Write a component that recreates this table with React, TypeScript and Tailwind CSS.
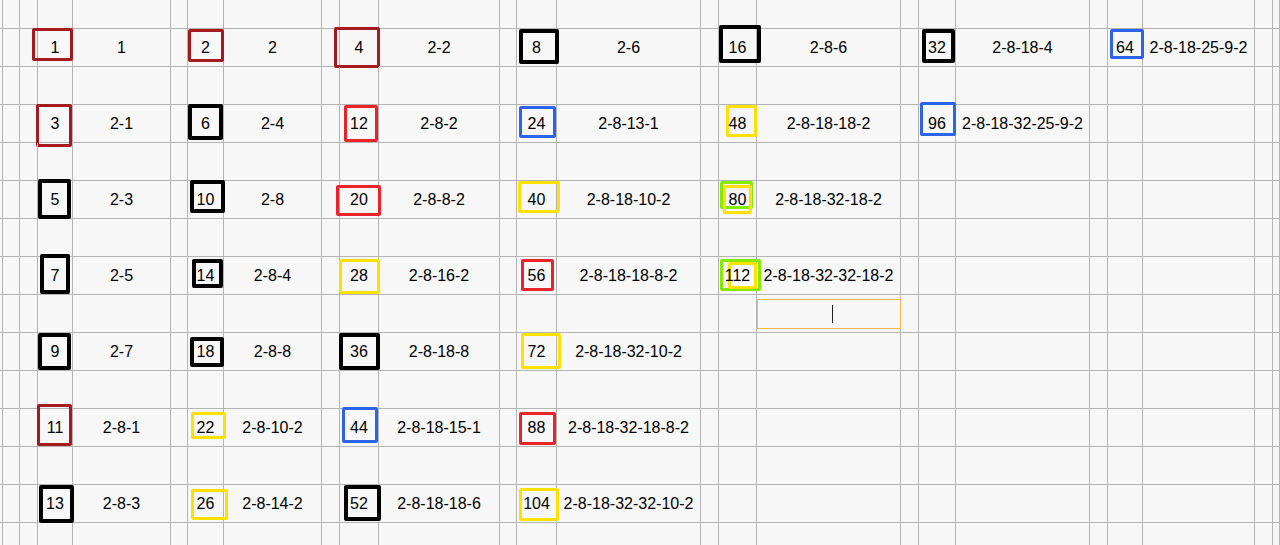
import React from "react";

type Box = { l: number; t: number; w: number; h: number; c: string; fill?: boolean };
type Entry = { n: string; t: string; boxes: Box[] } | null;

const COLOR: Record<string, string> = {
  dr: "border-[#a31a1f] border-[3px]",
  r: "border-[#ea2229] border-[3px]",
  b: "border-[#2b63e9] border-[3px]",
  y: "border-[#ffe100] border-[3px]",
  g: "border-[#84ea00] border-[3px]",
  k: "border-black border-4",
};

const DATA: Entry[][] = [
  [
    { n: "1", t: "1", boxes: [{ l: -6, t: -1, w: 41, h: 33, c: "dr" }] },
    { n: "2", t: "2", boxes: [{ l: 0, t: 0, w: 36, h: 33, c: "dr" }] },
    { n: "4", t: "2-2", boxes: [{ l: -6, t: -2, w: 46, h: 41, c: "dr" }] },
    { n: "8", t: "2-6", boxes: [{ l: 2, t: 0, w: 40, h: 35, c: "k" }] },
    { n: "16", t: "2-8-6", boxes: [{ l: 0, t: -4, w: 42, h: 38, c: "k" }] },
    { n: "32", t: "2-8-18-4", boxes: [{ l: 3, t: 0, w: 33, h: 34, c: "k" }] },
    { n: "64", t: "2-8-18-25-9-2", boxes: [{ l: 2, t: 0, w: 34, h: 30, c: "b" }] },
  ],
  [
    { n: "3", t: "2-1", boxes: [{ l: -2, t: -1, w: 36, h: 43, c: "dr" }] },
    { n: "6", t: "2-4", boxes: [{ l: 0, t: -1, w: 35, h: 36, c: "k" }] },
    { n: "12", t: "2-8-2", boxes: [{ l: 4, t: 0, w: 34, h: 37, c: "r" }] },
    { n: "24", t: "2-8-13-1", boxes: [{ l: 2, t: 1, w: 37, h: 32, c: "b" }] },
    { n: "48", t: "2-8-18-18-2", boxes: [{ l: 7, t: 0, w: 31, h: 32, c: "y" }] },
    { n: "96", t: "2-8-18-32-25-9-2", boxes: [{ l: 1, t: -3, w: 36, h: 34, c: "b" }] },
    null,
  ],
  [
    { n: "5", t: "2-3", boxes: [{ l: 0, t: -2, w: 33, h: 40, c: "k" }] },
    { n: "10", t: "2-8", boxes: [{ l: 2, t: -1, w: 35, h: 33, c: "k" }] },
    { n: "20", t: "2-8-8-2", boxes: [{ l: -4, t: 4, w: 45, h: 31, c: "r" }] },
    { n: "40", t: "2-8-18-10-2", boxes: [{ l: 1, t: 0, w: 42, h: 32, c: "y" }] },
    {
      n: "80",
      t: "2-8-18-32-18-2",
      boxes: [
        { l: 1, t: 0, w: 33, h: 28, c: "g" },
        { l: 4, t: 4, w: 29, h: 29, c: "y" },
      ],
    },
    null,
    null,
  ],
  [
    { n: "7", t: "2-5", boxes: [{ l: 2, t: -3, w: 30, h: 40, c: "k" }] },
    { n: "14", t: "2-8-4", boxes: [{ l: 4, t: 2, w: 31, h: 29, c: "k" }] },
    { n: "28", t: "2-8-16-2", boxes: [{ l: -1, t: 2, w: 41, h: 35, c: "y" }] },
    { n: "56", t: "2-8-18-18-8-2", boxes: [{ l: 4, t: 2, w: 33, h: 32, c: "r" }] },
    {
      n: "112",
      t: "2-8-18-32-32-18-2",
      boxes: [
        { l: 1, t: 2, w: 41, h: 32, c: "g" },
        { l: 9, t: 5, w: 29, h: 27, c: "y", fill: true },
      ],
    },
    null,
    null,
  ],
  [
    { n: "9", t: "2-7", boxes: [{ l: 0, t: 0, w: 33, h: 37, c: "k" }] },
    { n: "18", t: "2-8-8", boxes: [{ l: 2, t: 4, w: 34, h: 30, c: "k" }] },
    { n: "36", t: "2-8-18-8", boxes: [{ l: -1, t: 0, w: 41, h: 37, c: "k" }] },
    { n: "72", t: "2-8-18-32-10-2", boxes: [{ l: 4, t: 0, w: 40, h: 36, c: "y" }] },
    null,
    null,
    null,
  ],
  [
    { n: "11", t: "2-8-1", boxes: [{ l: -1, t: -5, w: 35, h: 42, c: "dr" }] },
    { n: "22", t: "2-8-10-2", boxes: [{ l: 3, t: 3, w: 35, h: 27, c: "y" }] },
    { n: "44", t: "2-8-18-15-1", boxes: [{ l: 2, t: -2, w: 36, h: 36, c: "b" }] },
    { n: "88", t: "2-8-18-32-18-8-2", boxes: [{ l: 2, t: 3, w: 37, h: 33, c: "r" }] },
    null,
    null,
    null,
  ],
  [
    { n: "13", t: "2-8-3", boxes: [{ l: 1, t: 0, w: 35, h: 38, c: "k" }] },
    { n: "26", t: "2-8-14-2", boxes: [{ l: 3, t: 4, w: 37, h: 31, c: "y" }] },
    { n: "52", t: "2-8-18-18-6", boxes: [{ l: 4, t: 0, w: 37, h: 36, c: "k" }] },
    { n: "104", t: "2-8-18-32-32-10-2", boxes: [{ l: 2, t: 3, w: 40, h: 33, c: "y" }] },
    null,
    null,
    null,
  ],
];

const BOX_COLS = [3, 6, 9, 12, 15, 18, 21];
const NCOLS = 25;
const NROWS = 15;

function Cell({ r, c }: { r: number; c: number }) {
  const base =
    "relative border-b border-r border-[#b4b4b4] flex items-center justify-center whitespace-nowrap";
  let content: React.ReactNode = null;
  if (r % 2 === 1) {
    const k = (r - 1) / 2;
    const row = DATA[k];
    if (row) {
      const gBox = BOX_COLS.indexOf(c);
      const gText = BOX_COLS.indexOf(c - 1);
      if (gBox >= 0 && row[gBox]) {
        const e = row[gBox]!;
        content = (
          <>
            {e.boxes.map((b, i) => (
              <div
                key={i}
                className={`absolute rounded-[2px] ${COLOR[b.c]} ${b.fill ? "bg-white" : ""}`}
                style={{ left: b.l, top: b.t, width: b.w, height: b.h }}
              />
            ))}
            <span className="relative z-10">{e.n}</span>
          </>
        );
      } else if (gText >= 0 && row[gText]) {
        content = <span>{row[gText]!.t}</span>;
      }
    }
  }
  if (r === 8 && c === 16) {
    content = (
      <div className="absolute left-0 top-[4px] w-[144px] h-[30px] border border-[#f3b54e] z-10">
        <div className="absolute left-[74px] top-[5px] w-px h-[18px] bg-[#222]" />
      </div>
    );
  }
  return <div className={base}>{content}</div>;
}

export default function App() {
  const cells: React.ReactNode[] = [];
  for (let r = 0; r < NROWS; r++) {
    for (let c = 0; c < NCOLS; c++) {
      cells.push(<Cell key={`${r}-${c}`} r={r} c={c} />);
    }
  }
  return (
    <div className="w-[1280px] h-[545px] overflow-hidden bg-[#f7f7f7] font-['Liberation_Sans',Arial,sans-serif] text-[16px] text-black">
      <div className="grid grid-cols-[3px_17px_18px_35px_98px_17px_36px_98px_18px_39px_121px_17px_40px_144px_18px_38px_144px_18px_37px_134px_18px_35px_112px_18px_1fr] grid-rows-[29px_repeat(14,38px)]">
        {cells}
      </div>
    </div>
  );
}
